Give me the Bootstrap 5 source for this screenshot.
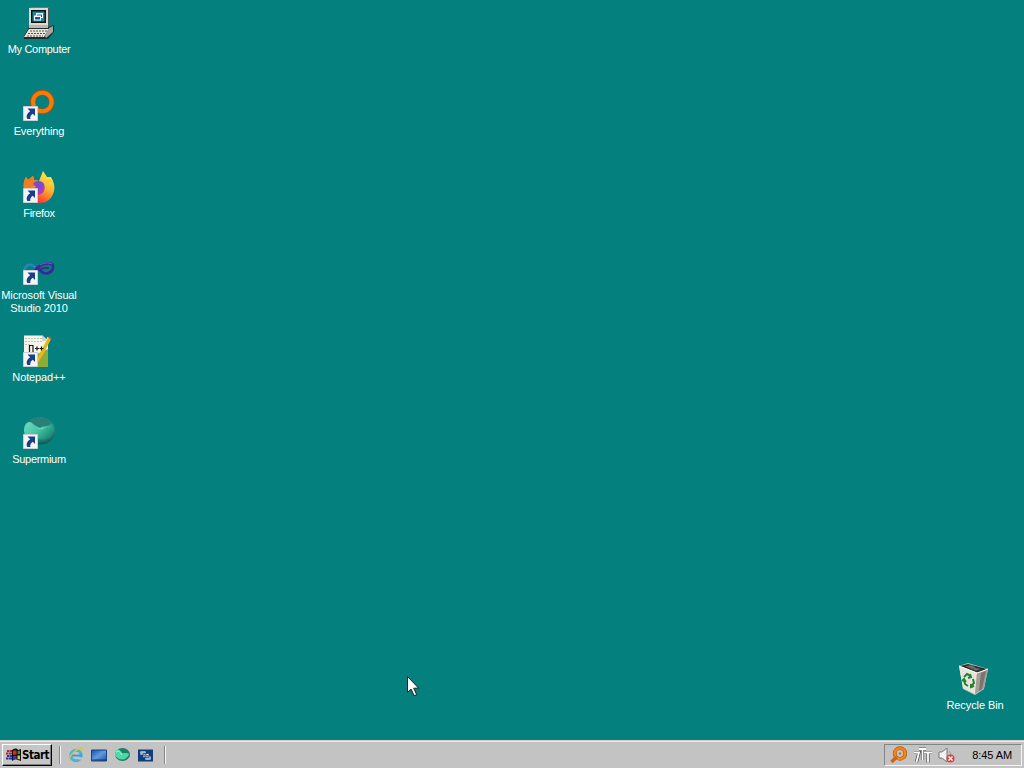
<!DOCTYPE html>
<html lang="en">
<head>
<meta charset="utf-8">
<title>Desktop</title>
<link rel="stylesheet" href="https://cdn.jsdelivr.net/npm/bootstrap@5.3.0/dist/css/bootstrap.min.css">
<style>
body{background:#04817e;font-family:"Liberation Sans",Arial,sans-serif;font-size:11px;line-height:13px;color:#fff;cursor:default}
.desk-item{width:78px;height:82px;padding-top:7px}
.desk-item svg{width:32px;height:32px}
.desk-label{margin-top:3.5px;white-space:nowrap}
.bin-item{width:78px;height:84px;margin-right:10px}
.ls-tight{letter-spacing:-.3px}.ls-snug{letter-spacing:-.13px}.ls-bin{letter-spacing:-.08px}
.taskbar{height:28px;background:#c3c3c4;border-top:1px solid #d4d0c8;box-shadow:inset 0 1px #e9e9e9;padding:3px 2px 2px 2px;color:#000}
.start-btn{width:50px;height:22px;background:#c6c6c6;border:1px solid;border-color:#fff #000 #000 #fff;box-shadow:inset -1px -1px #808080;font:bold 11.5px/20px "DejaVu Sans Condensed","DejaVu Sans",sans-serif;letter-spacing:-.5px;padding-left:3px;margin-top:-1px}
.grip{width:2px;height:18px;border-left:1px solid #858585;border-right:1px solid #f5f5f5}
.grip-start{margin-left:7px}.grip-end{margin-left:11px}
.quick{margin-left:7px;gap:7px}
.quick svg{width:16px;height:16px}
.tray{width:138px;height:22px;border:1px solid;border-color:#858585 #f5f5f5 #f5f5f5 #858585;padding:0 9px 0 5px}
.tray-langs{margin-left:7px}.tray-sound{margin-left:6px}
.clock{letter-spacing:-.1px}
.pointer{left:406px;top:675px;width:14px;height:22px}
</style>
<script src="https://cdn.jsdelivr.net/npm/bootstrap@5.3.0/dist/js/bootstrap.bundle.min.js"></script>
</head>
<body class="vh-100 overflow-hidden d-flex flex-column m-0">
<svg width="0" height="0" class="position-absolute" aria-hidden="true">
  <defs>
    <symbol id="shortcut" viewBox="0 0 15 15">
      <path d="M.5.5h14v14H.5z" fill="#f4f4f4" stroke="#c9cfd2"/>
      <path d="M4.500 2.500H12V10L9.800 7.800C8 9 7 10.500 7.300 13H4.500C2.500 10 4.500 7 7.200 5.200Z" fill="#173f8c"/>
    </symbol>
    <linearGradient id="fox" x1=".8" y1="0" x2=".3" y2="1"><stop offset="0" stop-color="#fff04a"/><stop offset=".45" stop-color="#ffb62c"/><stop offset=".8" stop-color="#fb5531"/><stop offset="1" stop-color="#e72d5d"/></linearGradient>
    <radialGradient id="orb" cx=".5" cy=".35" r=".65"><stop offset="0" stop-color="#63e3bc"/><stop offset=".6" stop-color="#20a487"/><stop offset="1" stop-color="#164e51"/></radialGradient>
    <linearGradient id="wave" x2="1" y2=".6"><stop stop-color="#6fd9c4"/><stop offset=".5" stop-color="#4cc9a9"/><stop offset="1" stop-color="#1d8f7a"/></linearGradient>
    <linearGradient id="pane" x2="1" y2="1"><stop stop-color="#1b4da0"/><stop offset=".5" stop-color="#5e9be0"/><stop offset="1" stop-color="#234f9c"/></linearGradient>
  </defs>
</svg>
<main class="flex-grow-1 d-flex justify-content-between">
  <div class="d-flex flex-column text-center">
    <div class="desk-item d-flex flex-column align-items-center">
      <svg viewBox="0 0 32 32">
        <path d="M6 1 9 0h18v18l-3 3Z" fill="#777"/>
        <path d="M6 1h19v19H6z" fill="#ddd9d0"/><path d="M25 1l2-1v18l-2 2Z" fill="#55595a"/>
        <path d="M8 3h15v13H8z" fill="#111"/><path d="M9.500 4.500h12v10h-12z" fill="#168aa5"/>
        <path d="M13 6h7v5h-7z" fill="#fff"/><path d="M14 7.500h5V10h-5z" fill="#155e9f"/>
        <path d="M11 8.500h7v5h-7z" fill="#fff"/><path d="M12 10h5v2.500h-5z" fill="#1752a0"/>
        <path d="M6 20h19l6-2v7l-6 7H1v-3Z" fill="#252b2b"/>
        <path d="M6 18h19v3H6z" fill="#b9b8b2"/><path d="M6 22h20l-5 8H1Z" fill="#e7e5dc"/><path d="m26 21 4-2v6l-7 6-1-2Z" fill="#a5a6a2"/>
        <path d="M7 24h17M5 26.500h17M4 29h16" stroke="#55564f" stroke-dasharray="2 1"/>
      </svg>
      <div class="desk-label ls-tight">My Computer</div>
    </div>
    <div class="desk-item d-flex flex-column align-items-center">
      <svg viewBox="0 0 32 32"><circle cx="19.300" cy="13" r="9.500" fill="none" stroke="#a75414" stroke-width="5.500"/><circle cx="19.300" cy="13" r="9.300" fill="none" stroke="#f57c08" stroke-width="4"/><use href="#shortcut" x="0" y="17" width="15" height="15"/></svg>
      <div class="desk-label ls-snug">Everything</div>
    </div>
    <div class="desk-item d-flex flex-column align-items-center">
      <svg viewBox="0 0 32 32">
        <path d="M3 6 5 9l5-4 1 4 5 1 2-5 2-5 4 6 4 0c3 5 4 10 3 14-2 8-7 12-14 12C8 32 1 27 1 18 0 13 1 10 3 6Z" fill="url(#fox)"/>
        <path d="M3 6 5 9l5-4 1 4 5 1-3 4-5 3-7 1C0 13 1 9 3 6Z" fill="#f67c20"/>
        <path d="M10 13c2-4 9-4 11 0 2 5-1 10-6 10l-6-5 4-2Z" fill="#8048d2"/><path d="M14 18c4 2 6-1 6-5 3 5 1 10-5 11Z" fill="#b33cb7"/>
        <use href="#shortcut" x="0" y="17" width="15" height="15"/>
      </svg>
      <div class="desk-label ls-tight">Firefox</div>
    </div>
    <div class="desk-item d-flex flex-column align-items-center">
      <svg viewBox="0 0 32 32" fill="none">
        <path d="M1.500 19c-1-6 5-9 9-6l6 5" stroke="#2a83bd" stroke-width="2.500"/>
        <path d="M12 17c3-3 5-5 9-6 5-1 9-1 9 3 0 5-5 7-9 6-3-1-5-3-8-6" stroke="#39289a" stroke-width="2.700"/>
        <path d="M16 17c3-2 6-3 10-2" stroke="#4a268a" stroke-width="2"/><path d="M17 12c4-2 8-3 12-1" stroke="#7a62c8"/>
        <use href="#shortcut" x="0" y="17" width="15" height="15"/>
      </svg>
      <div class="desk-label ls-snug">Microsoft Visual<br>Studio 2010</div>
    </div>
    <div class="desk-item d-flex flex-column align-items-center">
      <svg viewBox="0 0 32 32">
        <path d="M1 .5h18l6 5V32H1Z" fill="#f5f5ec"/><path d="M2 3.500h17M2 6.500h17M2 9.500h6" stroke="#bdc2bd" stroke-dasharray="2 1"/>
        <path d="M19 0v6h6" fill="#c9d6d1"/><path d="m14 19 11-5v18H14Z" fill="#8dac35"/>
        <path d="m14 26 3-9 8-15 3 2-8 16-6 9Z" fill="#e6b62a"/><path d="m17 17 8-15" stroke="#fff29a"/><path d="m25 2 1-1 3 2-1 2Z" fill="#9f6041"/>
        <path d="M6.500 17v-7M6 10.500h4V17M12 13.500h4M14 11.500v4M16.500 13.500h4M18.500 11.500v4" fill="none" stroke="#171717" stroke-width="1.200"/>
        <use href="#shortcut" x="0" y="17" width="15" height="15"/>
      </svg>
      <div class="desk-label ls-snug">Notepad++</div>
    </div>
    <div class="desk-item d-flex flex-column align-items-center">
      <svg viewBox="0 0 32 32">
        <ellipse cx="17" cy="14" rx="15.500" ry="13.500" fill="url(#orb)"/>
        <path d="M5 5C10-1 25-1 29 6c-3 4-7 2-12 5C12 9 9 5 5 5Z" fill="#2a8079"/>
        <path d="M1 14c0-7 4-11 8-8 4 6 9 9 13 5 4-2 7-1 9 2-3 7-8 10-15 8L2 19Z" fill="url(#wave)"/>
        <use href="#shortcut" x="0" y="17" width="15" height="15"/>
      </svg>
      <div class="desk-label ls-tight">Supermium</div>
    </div>
  </div>
  <div class="bin-item desk-item d-flex flex-column align-items-center align-self-end text-center">
    <svg viewBox="0 0 32 32">
      <path d="m0 3 9-3 20 6-4 20-9 6L4 26Z" fill="#c9c8c0"/>
      <path d="m1 3 8-2 19 5-9 4Z" fill="#292d2c"/><path d="m6 3 7-1 4 3 5 1-5 2Z" fill="#676967"/>
      <path d="m0 3 18 7-2 21L4 25Z" fill="#e6e5dc"/><path d="m18 10 11-4-4 19-9 6Z" fill="#a69e96"/><path d="m22 10 5-2-4 18-3 2Z" fill="#797470"/>
      <path d="m0 3 18 7 11-4" fill="none" stroke="#fff"/>
      <path d="m5 14 3-3 4 2M11 11l1 3-3 1M14 16l1 4-3 3M15 23l-3 1v-3M9 23l-3-2-1-4M3 18l2-2 2 3" fill="none" stroke="#238333" stroke-width="2"/>
    </svg>
    <div class="desk-label ls-bin">Recycle Bin</div>
  </div>
</main>
<footer class="taskbar d-flex align-items-center flex-shrink-0">
  <div class="start-btn d-flex align-items-center">
    <svg width="16" height="16" viewBox="0 0 16 16" class="flex-shrink-0">
      <path d="M6 3c3-2 5-2 6 0l3-1v12l-3-1c-2-1-3-1-6 1Z" fill="#111"/>
      <path d="M7 4c2-1 3-1 3.500 0v3.500L7 8Z" fill="#d52824"/><path d="m11.500 4 2.500-.5V7h-2.500Z" fill="#29904b"/><path d="m7 9 3.500-.5V12L7 13Z" fill="#2641b8"/><path d="M11.500 8.500H14v4l-2.500-.5Z" fill="#e1c62d"/>
      <path d="M1 4h2M3.500 4H6M0 6.500h2M2.500 6.500H6" stroke="#b1262b" stroke-width="2"/><path d="M1 9h2M3.500 9H6M0 11.500h2M2.500 11.500H6" stroke="#2931a0" stroke-width="2"/>
    </svg><span>Start</span>
  </div>
  <div class="grip grip-start"></div>
  <div class="quick d-flex align-items-center">
    <svg viewBox="0 0 16 16"><circle cx="8" cy="8.500" r="5.200" fill="none" stroke="#4aafe1" stroke-width="3"/><path d="M4 8.500h10" stroke="#399ed8" stroke-width="2"/><path d="M10 10.500h5v2h-5z" fill="#c5c5c5"/><path d="M2 14C-1 12 5 4 12 1c3 0 3 2 2 4" fill="none" stroke="#d9c548" stroke-width="1.400"/></svg>
    <svg viewBox="0 0 16 16"><path d="M.5 3h15v11H.5z" fill="url(#pane)" stroke="#174381"/><path d="M1 12.500h14v1H1z" fill="#15366e"/></svg>
    <svg viewBox="0 0 16 16"><ellipse cx="8.500" cy="7.500" rx="7.500" ry="6.500" fill="#198167"/><path d="M1 6C2 1 6 2 8 6c2 1 4-1 7 1-2 6-7 6-10 5L1 9Z" fill="#4ed8a6"/><path d="M2 5c3-2 4 0 6 3" fill="none" stroke="#b6f3da"/></svg>
    <svg viewBox="0 0 16 16"><path d="M1 2.500h15v12H1z" fill="#103f79"/><path d="M3 4h6v4H3zM6 6.500h6v4H6zM8 9h6v4H8z" fill="#f5f7fc" stroke="#103f79" stroke-width=".8"/><path d="M4 6h4M7 8.500h4M9 11h4" stroke="#477ab7"/></svg>
  </div>
  <div class="grip grip-end"></div>
  <div class="tray d-flex align-items-center ms-auto">
    <svg width="17" height="18" viewBox="0 0 17 18"><circle cx="10" cy="7.500" r="5.300" fill="none" stroke="#a65417" stroke-width="3.800"/><circle cx="10" cy="7.500" r="5.300" fill="none" stroke="#f98412" stroke-width="2.600"/><circle cx="10" cy="7.500" r="1.200" fill="#c66b20"/><path d="m6.500 11-5 5" stroke="#c96615" stroke-width="3.500"/></svg>
    <svg class="tray-langs" width="18" height="16" viewBox="0 0 18 16"><g fill="none" stroke="#4c4c4c" stroke-width="3.200"><path d="M0 5.500h5L2.500 15M5 2h7M8.500 2v11M10 5.500h8M14 5.500v10"/></g><g fill="none" stroke="#fff" stroke-width="1.800"><path d="M0 5.500h5L2.500 15M5 2h7M8.500 2v11M10 5.500h8M14 5.500v10"/></g></svg>
    <svg class="tray-sound" width="17" height="16" viewBox="0 0 17 16"><path d="M1 5h3l5-4v14l-5-4H1Z" fill="#f4f4f4" stroke="#777"/><path d="M11 4c2 2 2 4 1 6" fill="none" stroke="#999"/><circle cx="12.500" cy="11.500" r="4" fill="#d64338"/><path d="m10.500 9.500 4 4m0-4-4 4" stroke="#fff" stroke-width="1.400"/></svg>
    <span class="clock ms-auto text-nowrap">8:45 AM</span>
  </div>
</footer>
<svg class="pointer position-absolute" viewBox="0 0 14 22"><path d="M1.500 1.500v16l3.600-3.400 3 6.700 2.600-1.200-3-6.400h5Z" fill="#fff" stroke="#10201f"/></svg>
</body>
</html>
